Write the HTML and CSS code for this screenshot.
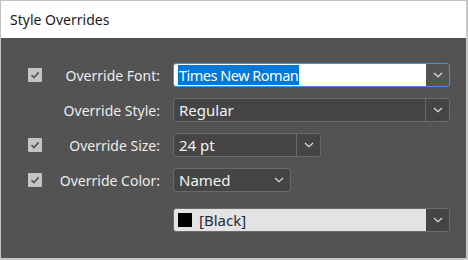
FILE: index.html
```html
<!DOCTYPE html>
<html>
<head>
<meta charset="utf-8">
<link rel="stylesheet" href="styles.css">
</head>
<body>
<div class="window">
  <div class="titlebar">Style Overrides</div>
  <div class="content">
    <div class="row">
      <span class="check"><svg viewBox="0 0 14 14" width="14" height="14"><path d="M3.5 7.2 L6 9.6 L10.6 4.4" fill="none" stroke="#555" stroke-width="1.6"/></svg></span>
      <label class="label">Override Font:</label>
      <div class="combo combo-focus w-full">
        <div class="field field-input"><span class="sel">Times New Roman</span></div>
        <div class="btn"><svg viewBox="0 0 10 6" width="10" height="6"><path d="M1 1 L5 4.6 L9 1" fill="none" stroke="#ddd" stroke-width="1.2"/></svg></div>
      </div>
    </div>
    <div class="row">
      <span class="check-empty"></span>
      <label class="label">Override Style:</label>
      <div class="combo w-full">
        <div class="field">Regular</div>
        <div class="btn btn-div"><svg viewBox="0 0 10 6" width="10" height="6"><path d="M1 1 L5 4.6 L9 1" fill="none" stroke="#ddd" stroke-width="1.2"/></svg></div>
      </div>
    </div>
    <div class="row">
      <span class="check"><svg viewBox="0 0 14 14" width="14" height="14"><path d="M3.5 7.2 L6 9.6 L10.6 4.4" fill="none" stroke="#555" stroke-width="1.6"/></svg></span>
      <label class="label">Override Size:</label>
      <div class="combo w-size">
        <div class="field">24 pt</div>
        <div class="btn btn-div"><svg viewBox="0 0 10 6" width="10" height="6"><path d="M1 1 L5 4.6 L9 1" fill="none" stroke="#ddd" stroke-width="1.2"/></svg></div>
      </div>
    </div>
    <div class="row">
      <span class="check"><svg viewBox="0 0 14 14" width="14" height="14"><path d="M3.5 7.2 L6 9.6 L10.6 4.4" fill="none" stroke="#555" stroke-width="1.6"/></svg></span>
      <label class="label">Override Color:</label>
      <div class="combo w-color">
        <div class="field">Named</div>
        <div class="btn"><svg viewBox="0 0 10 6" width="10" height="6"><path d="M1 1 L5 4.6 L9 1" fill="none" stroke="#ddd" stroke-width="1.2"/></svg></div>
      </div>
    </div>
    <div class="row row-swatch">
      <span class="check-empty"></span>
      <span class="label"></span>
      <div class="combo combo-light w-full">
        <div class="field field-light"><span class="swatch"></span>[Black]</div>
        <div class="btn btn-dark"><svg viewBox="0 0 10 6" width="10" height="6"><path d="M1 1 L5 4.6 L9 1" fill="none" stroke="#ddd" stroke-width="1.2"/></svg></div>
      </div>
    </div>
  </div>
</div>
</body>
</html>
```
FILE: styles.css
```css
html, body {
  margin: 0;
  padding: 0;
}
body {
  width: 468px;
  height: 260px;
  background: #c9c9c9;
  font-family: "Noto Sans", "Open Sans", sans-serif;
}
.window {
  box-sizing: border-box;
  width: 468px;
  height: 260px;
  border-top: 1px solid #c3c3c3;
  border-left: 1px solid #c3c3c3;
  border-right: 2px solid #c9c9c9;
  border-bottom: 2px solid #c9c9c9;
  display: flex;
  flex-direction: column;
}
.titlebar {
  height: 37px;
  background: #ffffff;
  color: #1a1a1a;
  font-size: 14px;
  line-height: 37px;
  padding-left: 9px;
  flex: none;
}
.content {
  flex: 1;
  background: #535353;
  padding: 25px 0 0 27px;
  display: flex;
  flex-direction: column;
  gap: 11px;
}
.row {
  display: flex;
  align-items: center;
  height: 24px;
}
.row-swatch {
  margin-top: 5px;
}
.check, .check-empty {
  width: 14px;
  height: 14px;
  flex: none;
}
.check {
  background: #c4c4c4;
  border-radius: 1px;
  display: block;
}
.check svg {
  display: block;
}
.label {
  width: 118px;
  flex: none;
  text-align: right;
  color: #ececec;
  font-size: 14px;
  margin-right: 13px;
}
.combo {
  box-sizing: border-box;
  height: 24px;
  display: flex;
  border: 1px solid #6a6a6a;
  border-radius: 3px;
  background: #454545;
  overflow: hidden;
}
.w-full { width: 277px; }
.w-size { width: 148px; }
.w-color { width: 118px; }
.combo-focus {
  border-color: #4a90d9;
  background: #545454;
}
.combo-light {
  border-color: #6a6a6a;
}
.field {
  flex: 1;
  color: #f2f2f2;
  font-size: 15px;
  line-height: 22px;
  padding-left: 5px;
  white-space: nowrap;
}
.field-input {
  background: #ffffff;
  padding-left: 4px;
  display: flex;
  align-items: center;
}
.sel {
  background: #0078d7;
  color: #ffffff;
  font-size: 14.5px;
  letter-spacing: -0.5px;
  line-height: 20px;
  padding: 0 1px;
}
.field-light {
  background: #e3e3e3;
  color: #1e2a3a;
  display: flex;
  align-items: center;
  padding-left: 4px;
}
.swatch {
  width: 14px;
  height: 14px;
  background: #000;
  margin-right: 7px;
  flex: none;
}
.btn {
  width: 23px;
  flex: none;
  display: flex;
  align-items: center;
  justify-content: center;
}
.btn-div {
  border-left: 1px solid #6a6a6a;
}
.btn-dark {
  background: #454545;
}
.btn svg {
  display: block;
}
```
